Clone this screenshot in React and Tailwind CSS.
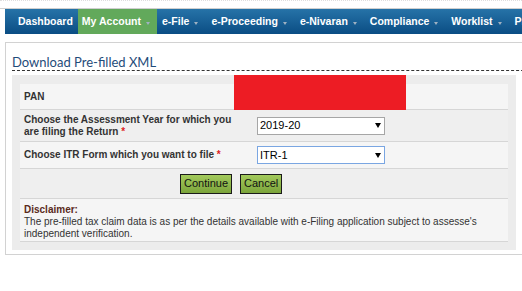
const navItems = [
  { label: "Dashboard", caret: false },
  { label: "My Account", caret: true, active: true },
  { label: "e-File", caret: true },
  { label: "e-Proceeding", caret: true },
  { label: "e-Nivaran", caret: true },
  { label: "Compliance", caret: true },
  { label: "Worklist", caret: true },
  { label: "Profile Settings", caret: true },
];

function NavItem({ label, caret, active }) {
  let cls = "flex items-center pl-[5px] pr-[8px]";
  if (active) cls = "flex items-center pl-[4px] pr-[7px] bg-[#62a95b]";
  if (!caret) cls = "flex items-center pl-[5px] pr-[5px]";
  return (
    <div className={cls}>
      <span className="text-white font-bold text-[10.5px] whitespace-nowrap">{label}</span>
      {caret && (
        <span className="ml-[5px] mt-[3px] w-0 h-0 border-l-[2.5px] border-r-[2.5px] border-t-[3px] border-l-transparent border-r-transparent border-t-[#9fb1c2]" />
      )}
    </div>
  );
}

function Select({ value, focused }) {
  return (
    <div
      className={
        focused
          ? "w-[128px] h-[18px] bg-white border border-[#7aa6e2] flex items-center justify-between pl-[2px] pr-[3px]"
          : "w-[128px] h-[18px] bg-white border border-[#a6a6a6] flex items-center justify-between pl-[2px] pr-[3px]"
      }
    >
      <span className="text-[11px] text-black leading-none">{value}</span>
      <span className="w-0 h-0 border-l-[3px] border-r-[3px] border-t-[5px] border-l-transparent border-r-transparent border-t-black" />
    </div>
  );
}

function Label({ children, required }) {
  return (
    <div className="w-[230px] pl-[4px] pr-[8px] text-[10px] font-bold text-[#333] leading-[11.5px]">
      {children}
      {required && <span className="text-[#d22]">&nbsp;*</span>}
    </div>
  );
}

export default function App() {
  return (
    <div className="w-[522px] h-[291px] overflow-hidden bg-white font-['Liberation_Sans',Arial,sans-serif]">
      <div className="h-[8px] border-t border-dotted border-[#dedede]" />
      <div className="border-t border-[#cfcfcf]" />

      <nav className="ml-[5px] w-[600px] h-[25px] flex pl-[8px] bg-gradient-to-b from-[#2673a8] to-[#0a4d84]">
        {navItems.map((item) => (
          <NavItem key={item.label} {...item} />
        ))}
      </nav>

      <div className="mt-[8px] ml-[5px] w-[560px] border border-[#d2d2d2] pl-[6px] pb-[4px]">
        <div className="pt-[12px] border-b border-dashed border-[#333]">
          <h1 className="font-['Lato',sans-serif] text-[13px] leading-[15px] text-[#1f4c7a]">
            Download Pre-filled XML
          </h1>
        </div>

        <div className="mt-[4px] w-[504px] bg-[#ececec] px-[8px] pt-[9px] pb-[8px]">
          <div className="relative h-[26px] flex items-center bg-[#f5f5f5] border-b border-[#d6d6d6]">
            <Label>PAN</Label>
            <div className="absolute left-[214px] top-[-9px] w-[172px] h-[35px] bg-[#ed1c24]" />
          </div>

          <div className="h-[32px] flex items-center bg-[#efefef] border-b border-[#d6d6d6]">
            <Label required>Choose the Assessment Year for which you are filing the Return</Label>
            <div className="pl-[7px]">
              <Select value="2019-20" />
            </div>
          </div>

          <div className="h-[27px] flex items-center bg-[#f5f5f5] border-b border-[#d6d6d6]">
            <Label required>Choose ITR Form which you want to file</Label>
            <div className="pl-[7px]">
              <Select value="ITR-1" focused />
            </div>
          </div>

          <div className="h-[30px] flex items-center gap-[8px] pl-[160px] bg-[#efefef] border-b border-[#d6d6d6]">
            <button className="h-[20px] px-[3px] border border-[#1a1a1a] bg-gradient-to-b from-[#a3ca5c] to-[#7ba43b] text-[11px] text-[#111] leading-none">
              Continue
            </button>
            <button className="h-[20px] px-[3px] border border-[#1a1a1a] bg-gradient-to-b from-[#a3ca5c] to-[#7ba43b] text-[11px] text-[#111] leading-none">
              Cancel
            </button>
          </div>

          <div className="h-[43px] pt-[5px] pl-[4px] pr-[10px] bg-[#f5f5f5] border-b border-[#d6d6d6] text-[10px] leading-[12px] text-[#333]">
            <div className="font-bold text-[#5a2a1c]">Disclaimer:</div>
            <div>
              The pre-filled tax claim data is as per the details available with e-Filing application subject to
              assesse's independent verification.
            </div>
          </div>
        </div>
      </div>
    </div>
  );
}
